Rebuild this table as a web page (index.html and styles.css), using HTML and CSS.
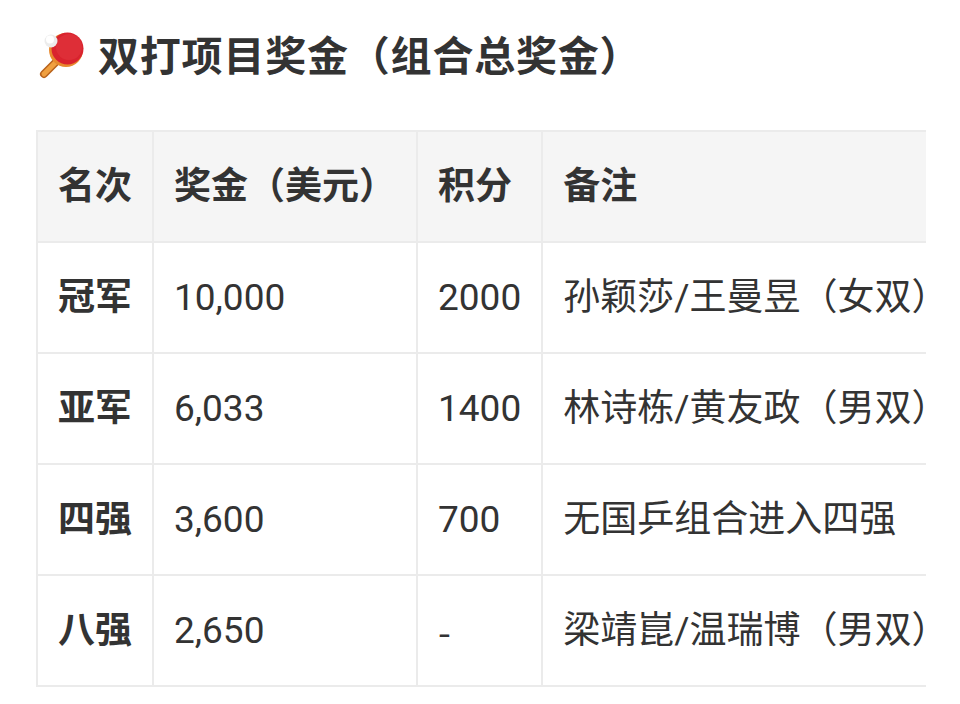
FILE: index.html
```html
<!DOCTYPE html>
<html lang="zh-CN">
<head>
<meta charset="utf-8">
<title>双打项目奖金</title>
<link rel="stylesheet" href="styles.css">
</head>
<body>
<div class="page">
  <h2 class="title">
    <svg class="emoji" viewBox="0 0 48 48" width="48" height="48" aria-hidden="true">
      <line x1="21" y1="28" x2="6" y2="43" stroke="#b8621c" stroke-width="8" stroke-linecap="round"/>
      <line x1="21" y1="28" x2="6" y2="43" stroke="#f0a040" stroke-width="5" stroke-linecap="round"/>
      <circle cx="28" cy="19" r="17" fill="#e8892e"/>
      <circle cx="29.5" cy="17.5" r="16" fill="#d9232e"/>
      <circle cx="31" cy="16" r="13" fill="#e33a3f" opacity="0.5"/>
      <circle cx="13" cy="10" r="6.5" fill="#ececec"/>
      <circle cx="12" cy="8.5" r="4" fill="#ffffff"/>
    </svg>
    <span>双打项目奖金（组合总奖金）</span>
  </h2>
  <div class="table-wrap">
    <table class="prize">
      <thead>
        <tr><th>名次</th><th>奖金（美元）</th><th>积分</th><th>备注</th></tr>
      </thead>
      <tbody>
        <tr><td class="rank">冠军</td><td>10,000</td><td>2000</td><td>孙颖莎/王曼昱（女双）</td></tr>
        <tr><td class="rank">亚军</td><td>6,033</td><td>1400</td><td>林诗栋/黄友政（男双）</td></tr>
        <tr><td class="rank">四强</td><td>3,600</td><td>700</td><td>无国乒组合进入四强</td></tr>
        <tr><td class="rank">八强</td><td>2,650</td><td class="dash">-</td><td>梁靖崑/温瑞博（男双）</td></tr>
      </tbody>
    </table>
  </div>
</div>
</body>
</html>
```

FILE: styles.css
```css
html, body {
  margin: 0;
  padding: 0;
  background: #ffffff;
}
body {
  font-family: Roboto, "Noto Sans CJK SC", "Noto Sans", sans-serif;
  color: #333333;
}
.page {
  padding: 24px 34px 0 36px;
}
.title {
  display: flex;
  align-items: center;
  margin: 0;
  height: 58px;
  font-size: 41px;
  font-weight: 700;
  color: #333333;
  letter-spacing: 0.8px;
}
.emoji {
  display: block;
  margin-left: 2px;
  margin-right: 12px;
  margin-top: 3px;
  flex: none;
}
.table-wrap {
  margin-top: 48px;
  width: 890px;
  overflow: hidden;
}
.prize {
  border-collapse: collapse;
  font-size: 37px;
  white-space: nowrap;
}
.prize th, .prize td {
  border: 2px solid #ebebeb;
  padding: 21px 20px;
  height: 67px;
  line-height: 67px;
  text-align: left;
  vertical-align: middle;
}
.prize th {
  background: #f5f5f5;
  font-weight: 700;
}
.prize td {
  font-weight: 400;
}
.prize td.rank {
  font-weight: 700;
}
.prize td.dash {
  font-family: "Noto Sans CJK SC", sans-serif;
}
```
